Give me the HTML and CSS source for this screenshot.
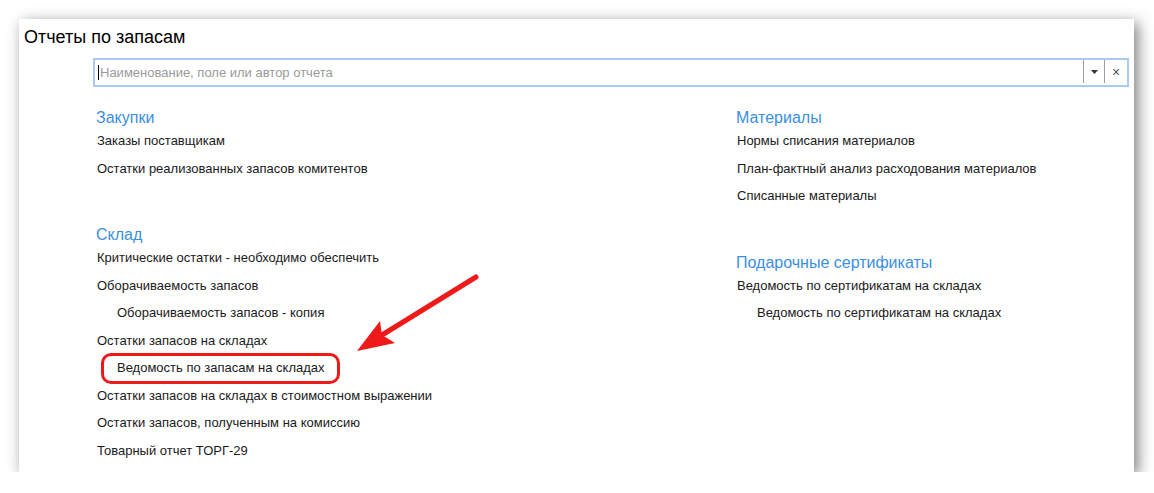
FILE: index.html
```html
<!DOCTYPE html>
<html lang="ru">
<head>
  <meta charset="UTF-8">
  <title>Отчеты по запасам</title>
  <link rel="stylesheet" href="styles.css">
</head>
<body>
  <div class="panel">
    <h1 class="title">Отчеты по запасам</h1>

    <div class="search">
      <div class="search-input">
        <span class="caret"></span>
        <span class="placeholder">Наименование, поле или автор отчета</span>
      </div>
      <button class="search-btn">
        <svg width="7" height="4" viewBox="0 0 7 4"><path d="M0 0h7L3.5 4z" fill="#333"/></svg>
      </button>
      <button class="search-btn clear">&times;</button>
    </div>

    <div class="columns">
      <div class="column">
        <div class="group">
          <div class="group-title">Закупки</div>
          <div class="item">Заказы поставщикам</div>
          <div class="item">Остатки реализованных запасов комитентов</div>
        </div>
        <div class="group">
          <div class="group-title">Склад</div>
          <div class="item">Критические остатки - необходимо обеспечить</div>
          <div class="item">Оборачиваемость запасов</div>
          <div class="item sub">Оборачиваемость запасов - копия</div>
          <div class="item">Остатки запасов на складах</div>
          <div class="item sub"><span class="marked">Ведомость по запасам на складах</span></div>
          <div class="item">Остатки запасов на складах в стоимостном выражении</div>
          <div class="item">Остатки запасов, полученным на комиссию</div>
          <div class="item">Товарный отчет ТОРГ-29</div>
        </div>
      </div>

      <div class="column">
        <div class="group">
          <div class="group-title">Материалы</div>
          <div class="item">Нормы списания материалов</div>
          <div class="item">План-фактный анализ расходования материалов</div>
          <div class="item">Списанные материалы</div>
        </div>
        <div class="group">
          <div class="group-title">Подарочные сертификаты</div>
          <div class="item">Ведомость по сертификатам на складах</div>
          <div class="item sub">Ведомость по сертификатам на складах</div>
        </div>
      </div>
    </div>
  </div>

  <!-- annotation arrow -->
  <svg class="annotation" width="1154" height="493" viewBox="0 0 1154 493">
    <line x1="476" y1="277" x2="382" y2="335" stroke="#ee1a1a" stroke-width="5" stroke-linecap="round"/>
    <polygon points="357,351 380,321 382,335 395,343" fill="#ee1a1a"/>
  </svg>
</body>
</html>
```

FILE: styles.css
```css
* {
  box-sizing: border-box;
}

body {
  margin: 0;
  padding: 19px 0 0 19px;
  background: #fff;
  font-family: 'Liberation Sans', Arial, sans-serif;
  color: #1a1a1a;
}

.panel {
  width: 1115px;
  height: 453px;
  background: #fff;
  box-shadow: 4px 4px 14px rgba(0,0,0,0.5);
}

.title {
  margin: 0;
  padding: 7px 0 0 5px;
  font-size: 18px;
  line-height: 22px;
  font-weight: normal;
  color: #000;
}

.search {
  display: flex;
  height: 29px;
  margin: 10px 5px 0 74px;
  border: 2px solid #a9cbef;
  background: #fff;
}

.search-input {
  flex: 1;
  display: flex;
  align-items: center;
  padding-left: 3px;
}

.caret {
  width: 1px;
  height: 15px;
  background: #000;
  margin-right: 1px;
}

.placeholder {
  font-size: 13px;
  color: #9a9a9a;
}

.search-btn {
  display: flex;
  align-items: center;
  justify-content: center;
  width: 21px;
  margin: 0 0 2px;
  padding: 0;
  border: none;
  border-left: 1px solid #9e9e9e;
  background: #fff;
  font-family: inherit;
}

.search-btn.clear {
  width: 23px;
  font-size: 14px;
  color: #555;
  line-height: 1;
}

.columns {
  display: grid;
  grid-template-columns: 640px 1fr;
  margin-top: 22px;
  padding-left: 77px;
}

.group + .group {
  margin-top: 44px;
}

.group-title {
  font-size: 16px;
  line-height: 18px;
  color: #3b8fe3;
}

.item {
  font-size: 13px;
  line-height: 27.5px;
  padding-left: 1px;
}

.item.sub {
  padding-left: 21px;
}

.marked {
  position: relative;
  display: inline-block;
  line-height: 16px;
}

.marked::after {
  content: "";
  position: absolute;
  left: -16px;
  right: -15px;
  top: -7px;
  bottom: -8px;
  border: 3px solid #ee1a1a;
  border-radius: 10px;
}

.annotation {
  position: absolute;
  left: 0;
  top: 0;
  pointer-events: none;
}
```
